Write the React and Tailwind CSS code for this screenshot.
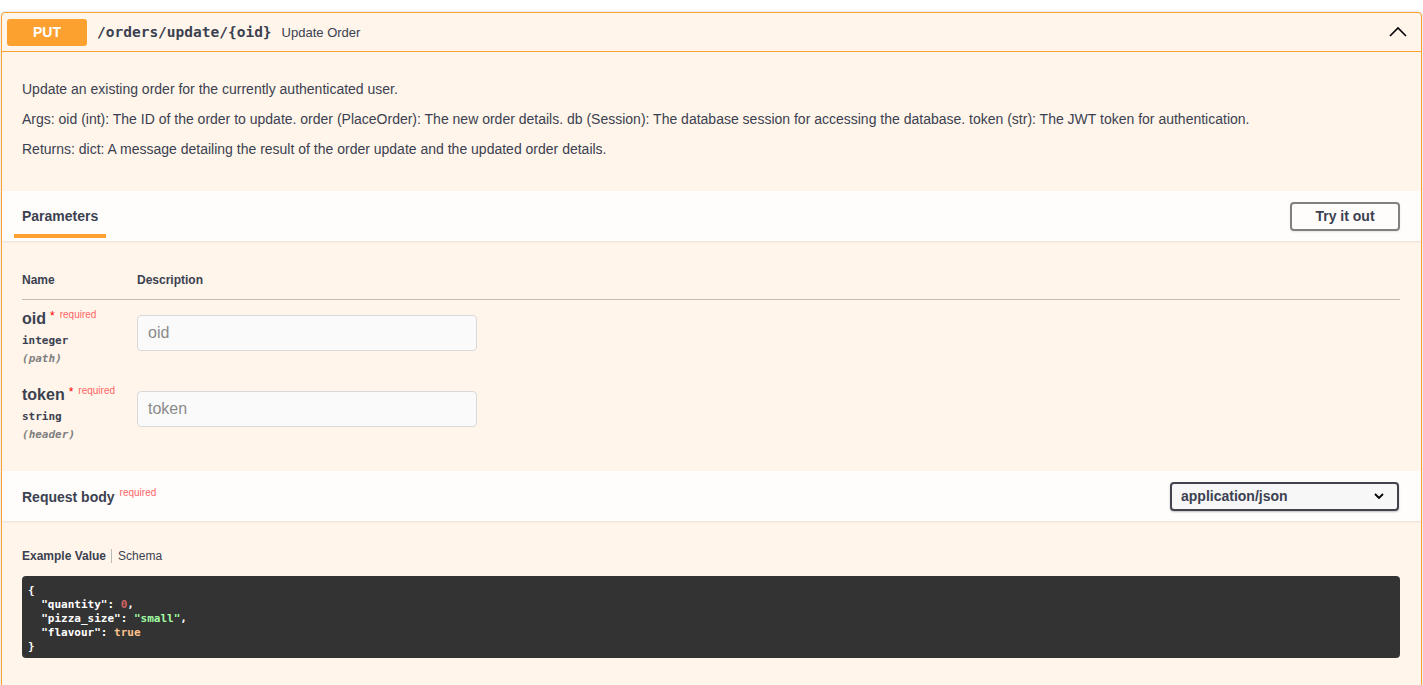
import React from "react";

const sans = { fontFamily: '"Liberation Sans", Arial, sans-serif' };
const mono = { fontFamily: '"DejaVu Sans Mono", "Liberation Mono", monospace' };

function ParamRow({ name, type, where, placeholder }) {
  return (
    <div className="flex">
      <div className="w-[115px] shrink-0">
        <div className="flex items-start leading-[20px]">
          <span className="text-[16px] font-bold text-[#3b4151]">{name}</span>
          <span className="ml-[4px] text-[12px] text-[#ff0000] leading-[14px]">*</span>
          <span className="ml-[5px] text-[10px] text-[#ff6666] leading-[12px]">required</span>
        </div>
        <div className="text-[11px] font-bold text-[#3b4151] leading-[14px] mt-[5px]" style={mono}>{type}</div>
        <div className="text-[11px] italic font-bold text-[#808080] leading-[14px] mt-[4px]" style={mono}>({where})</div>
      </div>
      <div className="pt-[6px]">
        <div className="w-[340px] h-[36px] rounded-[4px] border border-[#d9d9d9] bg-[#fafafa] flex items-center px-[10px] text-[16px] text-[#8a8a8a]">
          {placeholder}
        </div>
      </div>
    </div>
  );
}

export default function App() {
  return (
    <div className="min-h-[685px] bg-white pt-[12px] px-[1px]" style={sans}>
      <div className="border border-[#fca130] rounded-[4px] bg-[#fff5ea] shadow-[0_0_3px_rgba(0,0,0,0.19)] overflow-hidden">
        {/* header */}
        <div className="h-[39px] flex items-center px-[5px] border-b border-[#fca130]">
          <div className="w-[80px] h-[27px] rounded-[3px] bg-[#fca130] text-white text-[14px] font-bold flex items-center justify-center">
            PUT
          </div>
          <div className="pl-[10px] pr-[10px] mt-[2px] text-[14.5px] font-bold text-[#3b4151]" style={mono}>
            /orders/update/{"{oid}"}
          </div>
          <div className="text-[13px] mt-[1px] text-[#3b4151]">Update Order</div>
          <div className="flex-1" />
          <svg width="20" height="20" viewBox="0 0 20 20" className="mr-[8px]">
            <path d="M2 14 L10 6 L18 14" fill="none" stroke="#000" strokeWidth="1.6" />
          </svg>
        </div>

        {/* description */}
        <div className="pt-[27px] pb-[32px] px-[20px] text-[14px] text-[#3b4151] flex flex-col gap-[10px]">
          <p className="leading-[20px]">Update an existing order for the currently authenticated user.</p>
          <p className="leading-[20px]">
            Args: oid (int): The ID of the order to update. order (PlaceOrder): The new order details. db (Session): The database session for accessing the database. token (str): The JWT token for authentication.
          </p>
          <p className="leading-[20px]">Returns: dict: A message detailing the result of the order update and the updated order details.</p>
        </div>

        {/* parameters header */}
        <div className="h-[50px] bg-[#fffdfb] shadow-[0_1px_2px_rgba(0,0,0,0.1)] flex items-stretch justify-between pl-[12px] pr-[21px] relative">
          <div className="relative flex items-center px-[8px]">
            <span className="text-[14px] font-bold text-[#3b4151]">Parameters</span>
            <div className="absolute left-0 right-0 bottom-[3px] h-[4px] bg-[#fca130]" />
          </div>
          <div className="flex items-center">
            <div className="w-[110px] h-[29px] rounded-[4px] border-2 border-[#808080] flex items-center justify-center text-[14px] font-bold text-[#3b4151] shadow-[0_1px_2px_rgba(0,0,0,0.1)]">
              Try it out
            </div>
          </div>
        </div>

        {/* parameters table */}
        <div className="pl-[20px] pr-[21px] pt-[32px] pb-[29px]">
          <div className="flex border-b border-[#c4bdb3] pb-[12px] text-[12px] font-bold text-[#3b4151] leading-[14px]">
            <div className="w-[115px]">Name</div>
            <div>Description</div>
          </div>
          <div className="pt-[9px]">
            <ParamRow name="oid" type="integer" where="path" placeholder="oid" />
          </div>
          <div className="pt-[19px]">
            <ParamRow name="token" type="string" where="header" placeholder="token" />
          </div>
        </div>

        {/* request body header */}
        <div className="h-[50px] bg-[#fffdfb] shadow-[0_1px_2px_rgba(0,0,0,0.1)] flex items-center justify-between pl-[20px] pr-[22px]">
          <div className="flex items-start">
            <span className="text-[14px] font-bold text-[#3b4151] mt-[2px]">Request body</span>
            <span className="ml-[5px] text-[10px] text-[#ff6666] mt-0">required</span>
          </div>
          <div className="w-[229px] h-[29px] rounded-[4px] border-2 border-[#41444e] bg-[#f7f7f7] shadow-[0_1px_2px_rgba(0,0,0,0.25)] flex items-center justify-between pl-[9px] pr-[12px]">
            <span className="text-[14px] font-bold text-[#3b4151]">application/json</span>
            <svg width="12" height="12" viewBox="0 0 12 12">
              <path d="M2 4 L6 8 L10 4" fill="none" stroke="#000" strokeWidth="1.8" />
            </svg>
          </div>
        </div>

        {/* example */}
        <div className="pl-[20px] pr-[21px] pt-[28px] pb-[40px]">
          <div className="flex items-center text-[12px] text-[#3b4151] leading-[14px]">
            <span className="font-bold pr-[5px]">Example Value</span>
            <span className="w-px h-[14px] bg-[#bbb]" />
            <span className="pl-[6px]">Schema</span>
          </div>
          <div className="mt-[13px] rounded-[4px] bg-[#333333] px-[6px] pt-[8px] pb-[4px] text-[11px] leading-[14px] font-bold text-white" style={mono}>
            <div className="whitespace-pre">{"{"}</div>
            <div className="whitespace-pre">{'  "quantity": '}<span className="text-[#d36363]">0</span>,</div>
            <div className="whitespace-pre">{'  "pizza_size": '}<span className="text-[#a2fca2]">"small"</span>,</div>
            <div className="whitespace-pre">{'  "flavour": '}<span className="text-[#fcc28c]">true</span></div>
            <div className="whitespace-pre">{"}"}</div>
          </div>
        </div>
      </div>
    </div>
  );
}
